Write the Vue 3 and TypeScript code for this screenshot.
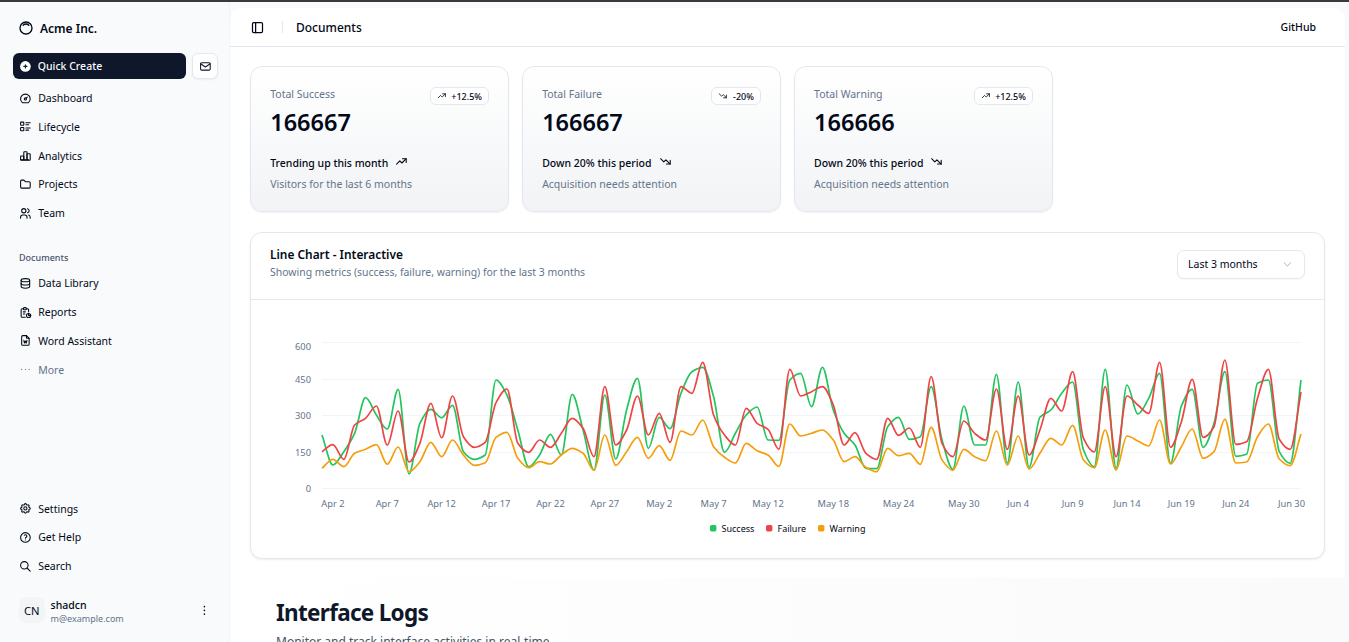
<script setup lang="ts">
const circle = (cx: number, cy: number, r: number) =>
  `M${cx - r} ${cy}a${r} ${r} 0 1 0 ${r * 2} 0a${r} ${r} 0 1 0 ${-r * 2} 0`
const rect = (x: number, y: number, w: number, h: number, r: number) =>
  `M${x + r} ${y}h${w - 2 * r}a${r} ${r} 0 0 1 ${r} ${r}v${h - 2 * r}a${r} ${r} 0 0 1 ${-r} ${r}h${-(w - 2 * r)}a${r} ${r} 0 0 1 ${-r} ${-r}v${-(h - 2 * r)}a${r} ${r} 0 0 1 ${r} ${-r}z`

const icons: Record<string, string[]> = {
  logo: ['M5.636 5.636a9 9 0 1 0 12.728 12.728a9 9 0 0 0 -12.728 -12.728z', 'M16.243 7.757a6 6 0 0 0 -8.486 0'],
  mail: [rect(3, 5, 18, 14, 2), 'M3 7l9 6l9 -6'],
  dashboard: [circle(12, 13, 2), 'M13.45 11.55l2.05 -2.05', 'M6.4 20a9 9 0 1 1 11.2 0z'],
  list: ['M13 5h8', 'M13 9h5', 'M13 15h8', 'M13 19h5', rect(3, 4, 6, 6, 1), rect(3, 14, 6, 6, 1)],
  chart: [rect(3, 13, 6, 8, 1), rect(15, 9, 6, 12, 1), rect(9, 5, 6, 16, 1), 'M4 20h14'],
  folder: ['M5 4h4l3 3h7a2 2 0 0 1 2 2v8a2 2 0 0 1 -2 2h-14a2 2 0 0 1 -2 -2v-11a2 2 0 0 1 2 -2'],
  users: [circle(9, 7, 4), 'M3 21v-2a4 4 0 0 1 4 -4h4a4 4 0 0 1 4 4v2', 'M16 3.13a4 4 0 0 1 0 7.75', 'M21 21v-2a4 4 0 0 0 -3 -3.85'],
  database: ['M4 6a8 3 0 1 0 16 0a8 3 0 1 0 -16 0', 'M4 6v6a8 3 0 0 0 16 0v-6', 'M4 12v6a8 3 0 0 0 16 0v-6'],
  report: ['M8 5h-2a2 2 0 0 0 -2 2v12a2 2 0 0 0 2 2h5.697', 'M18 14v4h4', 'M18 11v-4a2 2 0 0 0 -2 -2h-2', rect(8, 3, 6, 4, 2), circle(18, 18, 4), 'M8 11h4', 'M8 15h3'],
  word: ['M14 3v4a1 1 0 0 0 1 1h4', 'M17 21h-10a2 2 0 0 1 -2 -2v-14a2 2 0 0 1 2 -2h7l5 5v11a2 2 0 0 1 -2 2z', 'M9 12l1.333 5l1.667 -4l1.667 4l1.333 -5'],
  dots: ['M5 12h.01', 'M12 12h.01', 'M19 12h.01'],
  dotsV: ['M12 5v.01', 'M12 12v.01', 'M12 19v.01'],
  settings: ['M10.325 4.317c.426 -1.756 2.924 -1.756 3.35 0a1.724 1.724 0 0 0 2.573 1.066c1.543 -.94 3.31 .826 2.37 2.37a1.724 1.724 0 0 0 1.065 2.572c1.756 .426 1.756 2.924 0 3.35a1.724 1.724 0 0 0 -1.066 2.573c.94 1.543 -.826 3.31 -2.37 2.37a1.724 1.724 0 0 0 -2.572 1.065c-.426 1.756 -2.924 1.756 -3.35 0a1.724 1.724 0 0 0 -2.573 -1.066c-1.543 .94 -3.31 -.826 -2.37 -2.37a1.724 1.724 0 0 0 -1.065 -2.572c-1.756 -.426 -1.756 -2.924 0 -3.35a1.724 1.724 0 0 0 1.066 -2.573c-.94 -1.543 .826 -3.31 2.37 -2.37c1 .608 2.296 .07 2.572 -1.065z', circle(12, 12, 3)],
  help: [circle(12, 12, 9), 'M12 17v.01', 'M12 13.5a1.5 1.5 0 0 1 1 -1.5a2.6 2.6 0 1 0 -3 -4'],
  search: [circle(10, 10, 7), 'M21 21l-6 -6'],
  panel: [rect(4, 4, 16, 16, 2), 'M9 4v16'],
  up: ['M3 17l6 -6l4 4l8 -8', 'M14 7h7v7'],
  down: ['M3 7l6 6l4 -4l8 8', 'M21 10v7h-7'],
  chevron: ['M6 9l6 6l6 -6'],
}

const mainNav = [
  { label: 'Dashboard', icon: 'dashboard' },
  { label: 'Lifecycle', icon: 'list' },
  { label: 'Analytics', icon: 'chart' },
  { label: 'Projects', icon: 'folder' },
  { label: 'Team', icon: 'users' },
]
const docNav = [
  { label: 'Data Library', icon: 'database' },
  { label: 'Reports', icon: 'report' },
  { label: 'Word Assistant', icon: 'word' },
  { label: 'More', icon: 'dots', muted: true },
]
const footNav = [
  { label: 'Settings', icon: 'settings' },
  { label: 'Get Help', icon: 'help' },
  { label: 'Search', icon: 'search' },
]

const cards = [
  { title: 'Total Success', value: '166667', badge: '+12.5%', badgeIcon: 'up', foot: 'Trending up this month', footIcon: 'up', sub: 'Visitors for the last 6 months' },
  { title: 'Total Failure', value: '166667', badge: '-20%', badgeIcon: 'down', foot: 'Down 20% this period', footIcon: 'down', sub: 'Acquisition needs attention' },
  { title: 'Total Warning', value: '166666', badge: '+12.5%', badgeIcon: 'up', foot: 'Down 20% this period', footIcon: 'down', sub: 'Acquisition needs attention' },
]

// chart plot: one sample per day, Apr 1 to Jun 30
const X0 = 322
const STEP = 10.878
const xAt = (i: number) => X0 + STEP * i
// traced offsets (thirds of a pixel below y=330)
const success = [315,405,365,310,203,255,297,178,432,280,238,263,226,365,388,375,150,195,300,410,375,313,375,193,300,420,195,387,240,145,355,262,296,190,125,112,200,367,310,255,231,330,331,150,130,230,112,240,310,345,415,416,290,262,328,320,170,330,418,228,345,345,133,400,156,412,262,240,190,156,360,410,118,415,165,252,205,130,400,228,178,352,280,125,379,373,160,150,365,400,150]
const failure = [365,344,388,285,265,228,345,243,396,340,220,323,198,320,352,337,218,177,340,367,330,352,310,265,295,380,170,345,300,198,315,250,337,170,190,97,255,315,345,235,280,298,358,118,198,185,170,225,345,308,370,388,265,316,294,352,140,340,380,273,310,330,177,358,198,375,300,205,243,125,325,366,170,380,198,225,250,97,352,275,148,322,290,90,343,335,205,118,328,358,186]
const warning = [415,388,410,370,358,344,403,351,425,395,337,380,330,375,406,398,322,307,385,413,395,402,375,355,370,421,315,406,365,322,385,347,391,303,315,270,350,382,399,340,362,375,409,282,318,310,300,330,395,380,412,425,355,377,370,403,292,390,421,358,380,392,303,405,318,417,370,325,345,286,390,413,300,420,318,333,348,270,402,350,297,385,365,268,399,396,320,282,387,407,312]

// same shape as a monotone-x curve
function monotonePath(trace: number[]): string {
  const ys = trace.map((z) => 330 + z / 3)
  const n = ys.length
  const slopes = ys.slice(0, -1).map((y, i) => (ys[i + 1] - y) / STEP)
  const tang = ys.map((_, i) => {
    if (i === 0) return slopes[0]
    if (i === n - 1) return slopes[n - 2]
    const a = slopes[i - 1]
    const b = slopes[i]
    if (a * b <= 0) return 0
    return (2 * a * b) / (a + b)
  })
  let d = `M${xAt(0).toFixed(1)} ${ys[0].toFixed(1)}`
  for (let i = 0; i < n - 1; i++) {
    const h = STEP / 3
    d += `C${(xAt(i) + h).toFixed(1)} ${(ys[i] + tang[i] * h).toFixed(1)} ${(xAt(i + 1) - h).toFixed(1)} ${(ys[i + 1] - tang[i + 1] * h).toFixed(1)} ${xAt(i + 1).toFixed(1)} ${ys[i + 1].toFixed(1)}`
  }
  return d
}

const series = [
  { color: '#22c55e', d: monotonePath(success) },
  { color: '#ef4444', d: monotonePath(failure) },
  { color: '#f59e0b', d: monotonePath(warning) },
]
const grid = [
  { label: '600', y: 342.5, labelY: 350 },
  { label: '450', y: 379.5, labelY: 383 },
  { label: '300', y: 415.5, labelY: 419 },
  { label: '150', y: 452.5, labelY: 456 },
  { label: '0', y: 488.5, labelY: 492 },
]
const ticks: [string, number][] = [
  ['Apr 2', 1], ['Apr 7', 6], ['Apr 12', 11], ['Apr 17', 16], ['Apr 22', 21], ['Apr 27', 26],
  ['May 2', 31], ['May 7', 36], ['May 12', 41], ['May 18', 47], ['May 24', 53], ['May 30', 59],
  ['Jun 4', 64], ['Jun 9', 69], ['Jun 14', 74], ['Jun 19', 79], ['Jun 24', 84],
]
const legend = [
  { label: 'Success', color: '#22c55e', x: 710 },
  { label: 'Failure', color: '#ef4444', x: 766 },
  { label: 'Warning', color: '#f59e0b', x: 818 },
]
</script>

<template>
  <div class="app">
    <div class="topline"></div>
    <div class="shell">
      <aside class="sidebar">
        <div class="brand">
          <svg class="icon brand-icon" viewBox="0 0 24 24"><path v-for="d in icons.logo" :key="d" :d="d" /></svg>
          <span>Acme Inc.</span>
        </div>
        <div class="quick-row">
          <button class="quick">
            <svg class="icon" viewBox="0 0 24 24">
              <circle cx="12" cy="12" r="10" fill="#fff" stroke="none" />
              <path d="M9 12h6M12 9v6" stroke="#0f172a" />
            </svg>
            Quick Create
          </button>
          <button class="mail">
            <svg class="icon" viewBox="0 0 24 24"><path v-for="d in icons.mail" :key="d" :d="d" /></svg>
          </button>
        </div>
        <nav class="nav">
          <a v-for="item in mainNav" :key="item.label" class="nav-item">
            <svg class="icon" viewBox="0 0 24 24"><path v-for="d in icons[item.icon]" :key="d" :d="d" /></svg>
            {{ item.label }}
          </a>
        </nav>
        <div class="group-label">Documents</div>
        <nav class="nav nav-docs">
          <a v-for="item in docNav" :key="item.label" class="nav-item" :class="{ muted: item.muted }">
            <svg class="icon" viewBox="0 0 24 24"><path v-for="d in icons[item.icon]" :key="d" :d="d" /></svg>
            {{ item.label }}
          </a>
        </nav>
        <nav class="nav nav-foot">
          <a v-for="item in footNav" :key="item.label" class="nav-item">
            <svg class="icon" viewBox="0 0 24 24"><path v-for="d in icons[item.icon]" :key="d" :d="d" /></svg>
            {{ item.label }}
          </a>
        </nav>
        <div class="user">
          <div class="avatar">CN</div>
          <div class="user-copy">
            <strong>shadcn</strong>
            <small>m@example.com</small>
          </div>
          <svg class="icon user-more" viewBox="0 0 24 24"><path v-for="d in icons.dotsV" :key="d" :d="d" /></svg>
        </div>
      </aside>

      <main class="main">
        <header class="topbar">
          <svg class="icon panel-icon" viewBox="0 0 24 24"><path v-for="d in icons.panel" :key="d" :d="d" /></svg>
          <span class="divider"></span>
          <h2>Documents</h2>
          <a class="github">GitHub</a>
        </header>

        <div class="content">
          <section class="cards">
            <article v-for="card in cards" :key="card.title" class="stat">
              <div class="stat-head">
                <span class="stat-title">{{ card.title }}</span>
                <span class="badge">
                  <svg class="icon" viewBox="0 0 24 24"><path v-for="d in icons[card.badgeIcon]" :key="d" :d="d" /></svg>
                  {{ card.badge }}
                </span>
              </div>
              <div class="stat-value">{{ card.value }}</div>
              <div class="stat-foot">
                {{ card.foot }}
                <svg class="icon" viewBox="0 0 24 24"><path v-for="d in icons[card.footIcon]" :key="d" :d="d" /></svg>
              </div>
              <div class="stat-sub">{{ card.sub }}</div>
            </article>
          </section>

          <section class="chart-card">
            <div class="chart-head">
              <div>
                <h3>Line Chart - Interactive</h3>
                <p>Showing metrics (success, failure, warning) for the last 3 months</p>
              </div>
              <div class="select">
                Last 3 months
                <svg class="icon" viewBox="0 0 24 24"><path :d="icons.chevron[0]" /></svg>
              </div>
            </div>
            <svg class="chart" viewBox="251 300 1073 258">
              <g v-for="g in grid" :key="g.label">
                <line x1="322" x2="1301" :y1="g.y" :y2="g.y" class="grid-line" />
                <text x="311" :y="g.labelY" text-anchor="end" class="axis">{{ g.label }}</text>
              </g>
              <path v-for="s in series" :key="s.color" :d="s.d" fill="none" :stroke="s.color" stroke-width="1.7" />
              <text v-for="t in ticks" :key="t[0]" :x="xAt(t[1])" y="507" text-anchor="middle" class="axis">{{ t[0] }}</text>
              <text x="1305" y="507" text-anchor="end" class="axis">Jun 30</text>
              <g v-for="l in legend" :key="l.label">
                <rect :x="l.x" y="525" width="6.4" height="6.4" rx="1.6" :fill="l.color" />
                <text :x="l.x + 11.5" y="532" class="legend">{{ l.label }}</text>
              </g>
            </svg>
          </section>
        </div>

        <section class="logs">
          <h1>Interface Logs</h1>
          <p>Monitor and track interface activities in real-time</p>
        </section>
      </main>
    </div>
  </div>
</template>

<style>
html,
body {
  margin: 0;
  overflow: hidden;
}
</style>

<style scoped>
.app {
  height: 642px;
  overflow: hidden;
  background: #f8fafc;
  color: #020817;
  font-family: "Noto Sans", "Open Sans", sans-serif;
  font-size: 10.5px;
}

.topline {
  height: 2px;
  background: #3a3a3c;
}

.shell {
  display: flex;
  height: 640px;
}

.icon {
  flex: none;
  width: 12.8px;
  height: 12.8px;
  fill: none;
  stroke: currentColor;
  stroke-width: 2;
  stroke-linecap: round;
  stroke-linejoin: round;
}

.sidebar {
  display: flex;
  flex-direction: column;
  flex: none;
  box-sizing: border-box;
  width: 230px;
  height: 640px;
  padding: 0 11px 0 13px;
  border-right: 1px solid #f1f5f9;
}

.brand {
  display: flex;
  align-items: center;
  gap: 6px;
  height: 26px;
  margin-top: 13px;
  padding-left: 5px;
  font-size: 12px;
  font-weight: 600;
}

.brand-icon {
  width: 16px;
  height: 16px;
}

.quick-row {
  display: flex;
  gap: 6px;
  margin-top: 12px;
}

.quick {
  display: flex;
  flex: 1;
  align-items: center;
  gap: 6px;
  height: 26px;
  padding: 0 6px;
  border: 0;
  border-radius: 6px;
  background: #0f172a;
  color: #f8fafc;
  font: inherit;
  font-weight: 500;
}

.mail {
  display: grid;
  flex: none;
  place-items: center;
  box-sizing: border-box;
  width: 26px;
  height: 26px;
  padding: 0;
  border: 1px solid #e2e8f0;
  border-radius: 6px;
  background: #fff;
  box-shadow: 0 1px 2px rgba(15, 23, 42, 0.05);
  color: #0f172a;
}

.nav {
  display: flex;
  flex-direction: column;
  margin-top: 4.7px;
}

.nav-docs {
  margin-top: 3.4px;
}

.nav-item {
  display: flex;
  align-items: center;
  gap: 6px;
  height: 28.8px;
  padding-left: 6.4px;
  color: #020817;
}

.nav-item.muted {
  color: #64748b;
}

.group-label {
  margin-top: 23.7px;
  padding-left: 6px;
  color: #475569;
  font-size: 9px;
  font-weight: 500;
  line-height: 14px;
}

.nav-foot {
  margin-top: auto;
}

.user {
  display: flex;
  align-items: center;
  gap: 6px;
  margin: 15px 0 17.5px;
  padding-left: 6px;
}

.avatar {
  display: grid;
  flex: none;
  place-items: center;
  width: 25.6px;
  height: 25.6px;
  border-radius: 8px;
  background: #f3f4f6;
  font-size: 11.2px;
}

.user-copy {
  display: grid;
  gap: 0;
  padding-top: 3px;
  line-height: 13px;
}

.user-copy strong {
  font-weight: 500;
}

.user-copy small {
  color: #64748b;
  font-size: 9px;
}

.user-more {
  margin-left: auto;
  margin-right: 7px;
  stroke-width: 3;
}

.main {
  position: relative;
  flex: 1;
  min-width: 0;
  margin: 6px 4px 0 0;
  overflow: hidden;
  border-radius: 12px 12px 0 0;
  background: #fff;
}

.topbar {
  display: flex;
  align-items: center;
  box-sizing: border-box;
  height: 39px;
  padding: 0 29px 0 20px;
  border-bottom: 1px solid #e2e8f0;
}

.panel-icon {
  width: 15px;
  height: 15px;
}

.divider {
  width: 1px;
  height: 12.8px;
  margin: 0 13px 0 17px;
  background: #e2e8f0;
}

.topbar h2 {
  margin: 0;
  font-size: 12px;
  font-weight: 500;
}

.github {
  margin-left: auto;
  font-weight: 500;
}

.content {
  padding: 19px 20px 0;
}

.cards {
  display: grid;
  grid-template-columns: repeat(4, 1fr);
  gap: 12.8px;
}

.stat {
  box-sizing: border-box;
  height: 146px;
  padding: 19px 19.2px;
  border: 1px solid #e2e8f0;
  border-radius: 12px;
  background: linear-gradient(to bottom, #fff, #f1f3f5);
  box-shadow: 0 1px 2px rgba(15, 23, 42, 0.05);
}

.stat-head {
  display: flex;
  align-items: flex-start;
  justify-content: space-between;
  height: 17px;
}

.stat-title {
  color: #64748b;
  line-height: 17px;
}

.badge {
  display: flex;
  align-items: center;
  gap: 5px;
  box-sizing: border-box;
  height: 18px;
  margin-top: 1px;
  padding: 0 6px;
  border: 1px solid #e2e8f0;
  border-radius: 6px;
  background: #fff;
  font-size: 9px;
  font-weight: 500;
}

.badge .icon {
  width: 9.6px;
  height: 9.6px;
}

.stat-value {
  margin-top: 3px;
  font-size: 23.5px;
  font-weight: 600;
  line-height: 32px;
}

.stat-foot {
  display: flex;
  align-items: center;
  gap: 7px;
  margin-top: 16.5px;
  font-weight: 500;
  line-height: 16px;
}

.stat-foot .icon {
  margin-bottom: 5px;
}

.stat-sub {
  margin-top: 3.5px;
  color: #64748b;
  line-height: 16px;
}

.chart-card {
  box-sizing: border-box;
  height: 327px;
  margin-top: 20px;
  border: 1px solid #e2e8f0;
  border-radius: 12px;
  background: #fff;
  box-shadow: 0 1px 2px rgba(15, 23, 42, 0.08);
}

.chart-head {
  display: flex;
  align-items: flex-start;
  justify-content: space-between;
  box-sizing: border-box;
  height: 67px;
  padding: 13px 19px 0;
  border-bottom: 1px solid #e2e8f0;
}

.chart-head h3 {
  margin: 0;
  font-size: 11.9px;
  font-weight: 600;
  line-height: 17px;
}

.chart-head p {
  margin: 1px 0 0;
  color: #64748b;
  font-size: 10.45px;
  line-height: 16px;
}

.select {
  display: flex;
  align-items: center;
  justify-content: space-between;
  box-sizing: border-box;
  width: 128px;
  height: 29px;
  margin-top: 4px;
  padding: 0 10px 1px;
  border: 1px solid #e2e8f0;
  border-radius: 7px;
  background: #fff;
  box-shadow: 0 1px 2px rgba(15, 23, 42, 0.04);
}

.select .icon {
  color: #94a3b8;
  stroke-width: 1.6;
}

.chart {
  display: block;
  width: 100%;
  height: 258px;
}

.grid-line {
  stroke: #f1f5f9;
  stroke-width: 1;
}

.axis {
  fill: #64748b;
  font-size: 9.3px;
}

.legend {
  fill: #020817;
  font-size: 9px;
}

.logs {
  margin-top: 19px;
  padding: 18px 46px 0;
  background: linear-gradient(to right, #fff, #fafafa);
}

.logs h1 {
  margin: 0;
  color: #0f172a;
  font-size: 22.5px;
  font-weight: 700;
  letter-spacing: -0.7px;
  line-height: 34px;
}

.logs p {
  margin: 3px 0 0;
  color: #475569;
  font-size: 12px;
  line-height: 18px;
}
</style>
